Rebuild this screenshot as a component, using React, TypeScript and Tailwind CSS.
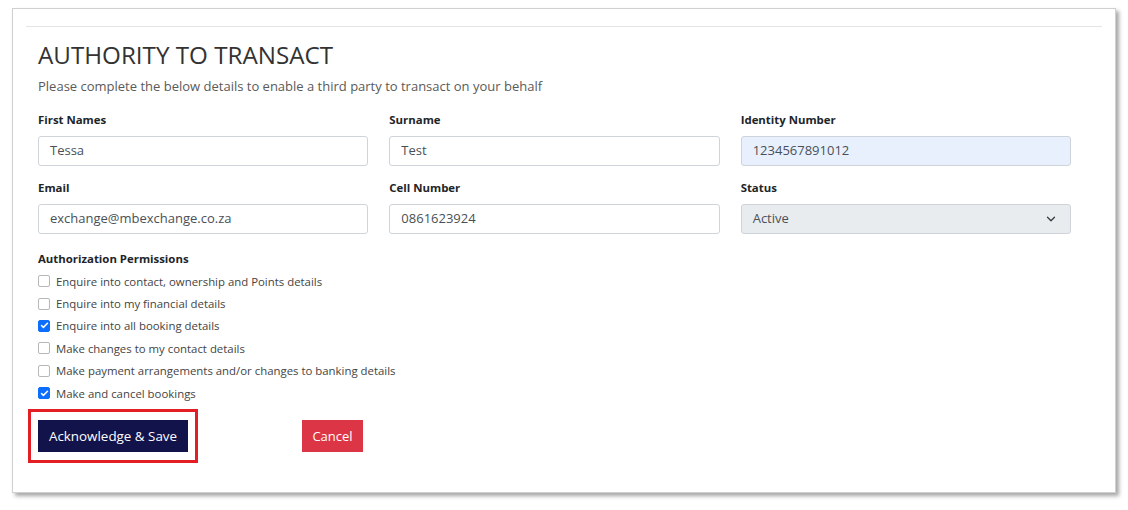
import { ChevronDown, Check } from 'lucide-react';

const permissions = [
  { label: 'Enquire into contact, ownership and Points details', checked: false },
  { label: 'Enquire into my financial details', checked: false },
  { label: 'Enquire into all booking details', checked: true },
  { label: 'Make changes to my contact details', checked: false },
  { label: 'Make payment arrangements and/or changes to banking details', checked: false },
  { label: 'Make and cancel bookings', checked: true },
];

function Field({ label, value, tint }: { label: string; value: string; tint?: boolean }) {
  return (
    <div className="flex flex-col">
      <label className="text-[11.4px] font-bold text-[#212529] leading-[16px] mb-[8px]">{label}</label>
      <div
        className={`h-[30px] rounded-[3px] border border-[#ced4da] px-[11px] flex items-center text-[13px] text-[#495057] ${
          tint ? 'bg-[#e8f0fe]' : 'bg-white'
        }`}
      >
        {value}
      </div>
    </div>
  );
}

export default function App() {
  return (
    <div className="w-[1128px] h-[510px] bg-white pt-[8px] pl-[12px]" style={{ fontFamily: '"Open Sans", "Noto Sans", sans-serif' }}>
      <div className="w-[1104px] h-[485px] bg-white border border-[#d0d0d0] shadow-[3px_3px_4px_rgba(0,0,0,0.35)] pt-[17px] px-[13px]">
        <div className="h-px bg-[#e5e5e5]" />
        <div className="px-[12px] pt-[12px]">
          <h1 className="text-[24.2px] leading-[32px] font-medium text-[#333]">AUTHORITY TO TRANSACT</h1>
          <p className="mt-[6px] text-[13px] leading-[18px] text-[#5a5a5a]">
            Please complete the below details to enable a third party to transact on your behalf
          </p>

          <div className="mt-[17px] w-[1033px] grid grid-cols-3 gap-x-[21px] gap-y-[14px]">
            <Field label="First Names" value="Tessa" />
            <Field label="Surname" value="Test" />
            <Field label="Identity Number" value="1234567891012" tint />
            <Field label="Email" value="exchange@mbexchange.co.za" />
            <Field label="Cell Number" value="0861623924" />
            <div className="flex flex-col">
              <label className="text-[11.4px] font-bold text-[#212529] leading-[16px] mb-[8px]">Status</label>
              <div className="h-[30px] rounded-[3px] border border-[#ced4da] bg-[#e9ecef] pl-[11px] pr-[12px] flex items-center justify-between text-[13px] text-[#495057]">
                <span>Active</span>
                <ChevronDown className="w-[14px] h-[14px] text-[#343a40]" strokeWidth={2.2} />
              </div>
            </div>
          </div>

          <div className="mt-[17px] text-[11.4px] font-bold text-[#212529] leading-[16px]">Authorization Permissions</div>
          <div className="mt-[3px] flex flex-col">
            {permissions.map((p) => (
              <div key={p.label} className="h-[22.4px] flex items-center gap-[6px]">
                <span
                  className={`w-[12px] h-[12px] rounded-[2px] flex items-center justify-center ${
                    p.checked ? 'bg-[#0d6efd] border border-[#0d6efd]' : 'bg-white border border-[#b8b8b8]'
                  }`}
                >
                  {p.checked && <Check className="w-[9px] h-[9px] text-white" strokeWidth={4} />}
                </span>
                <span className="text-[11.4px] text-[#444]">{p.label}</span>
              </div>
            ))}
          </div>

          <div className="mt-[5px] flex items-center">
            <div className="-ml-[10px] border-[3px] border-[#e31e24] px-[7px] py-[8px]">
              <button className="h-[32px] w-[150px] bg-[#12134a] text-white text-[13.4px]">Acknowledge &amp; Save</button>
            </div>
            <button className="ml-[104px] h-[32px] w-[61px] bg-[#dc3545] text-white text-[13px]">Cancel</button>
          </div>
        </div>
      </div>
    </div>
  );
}
